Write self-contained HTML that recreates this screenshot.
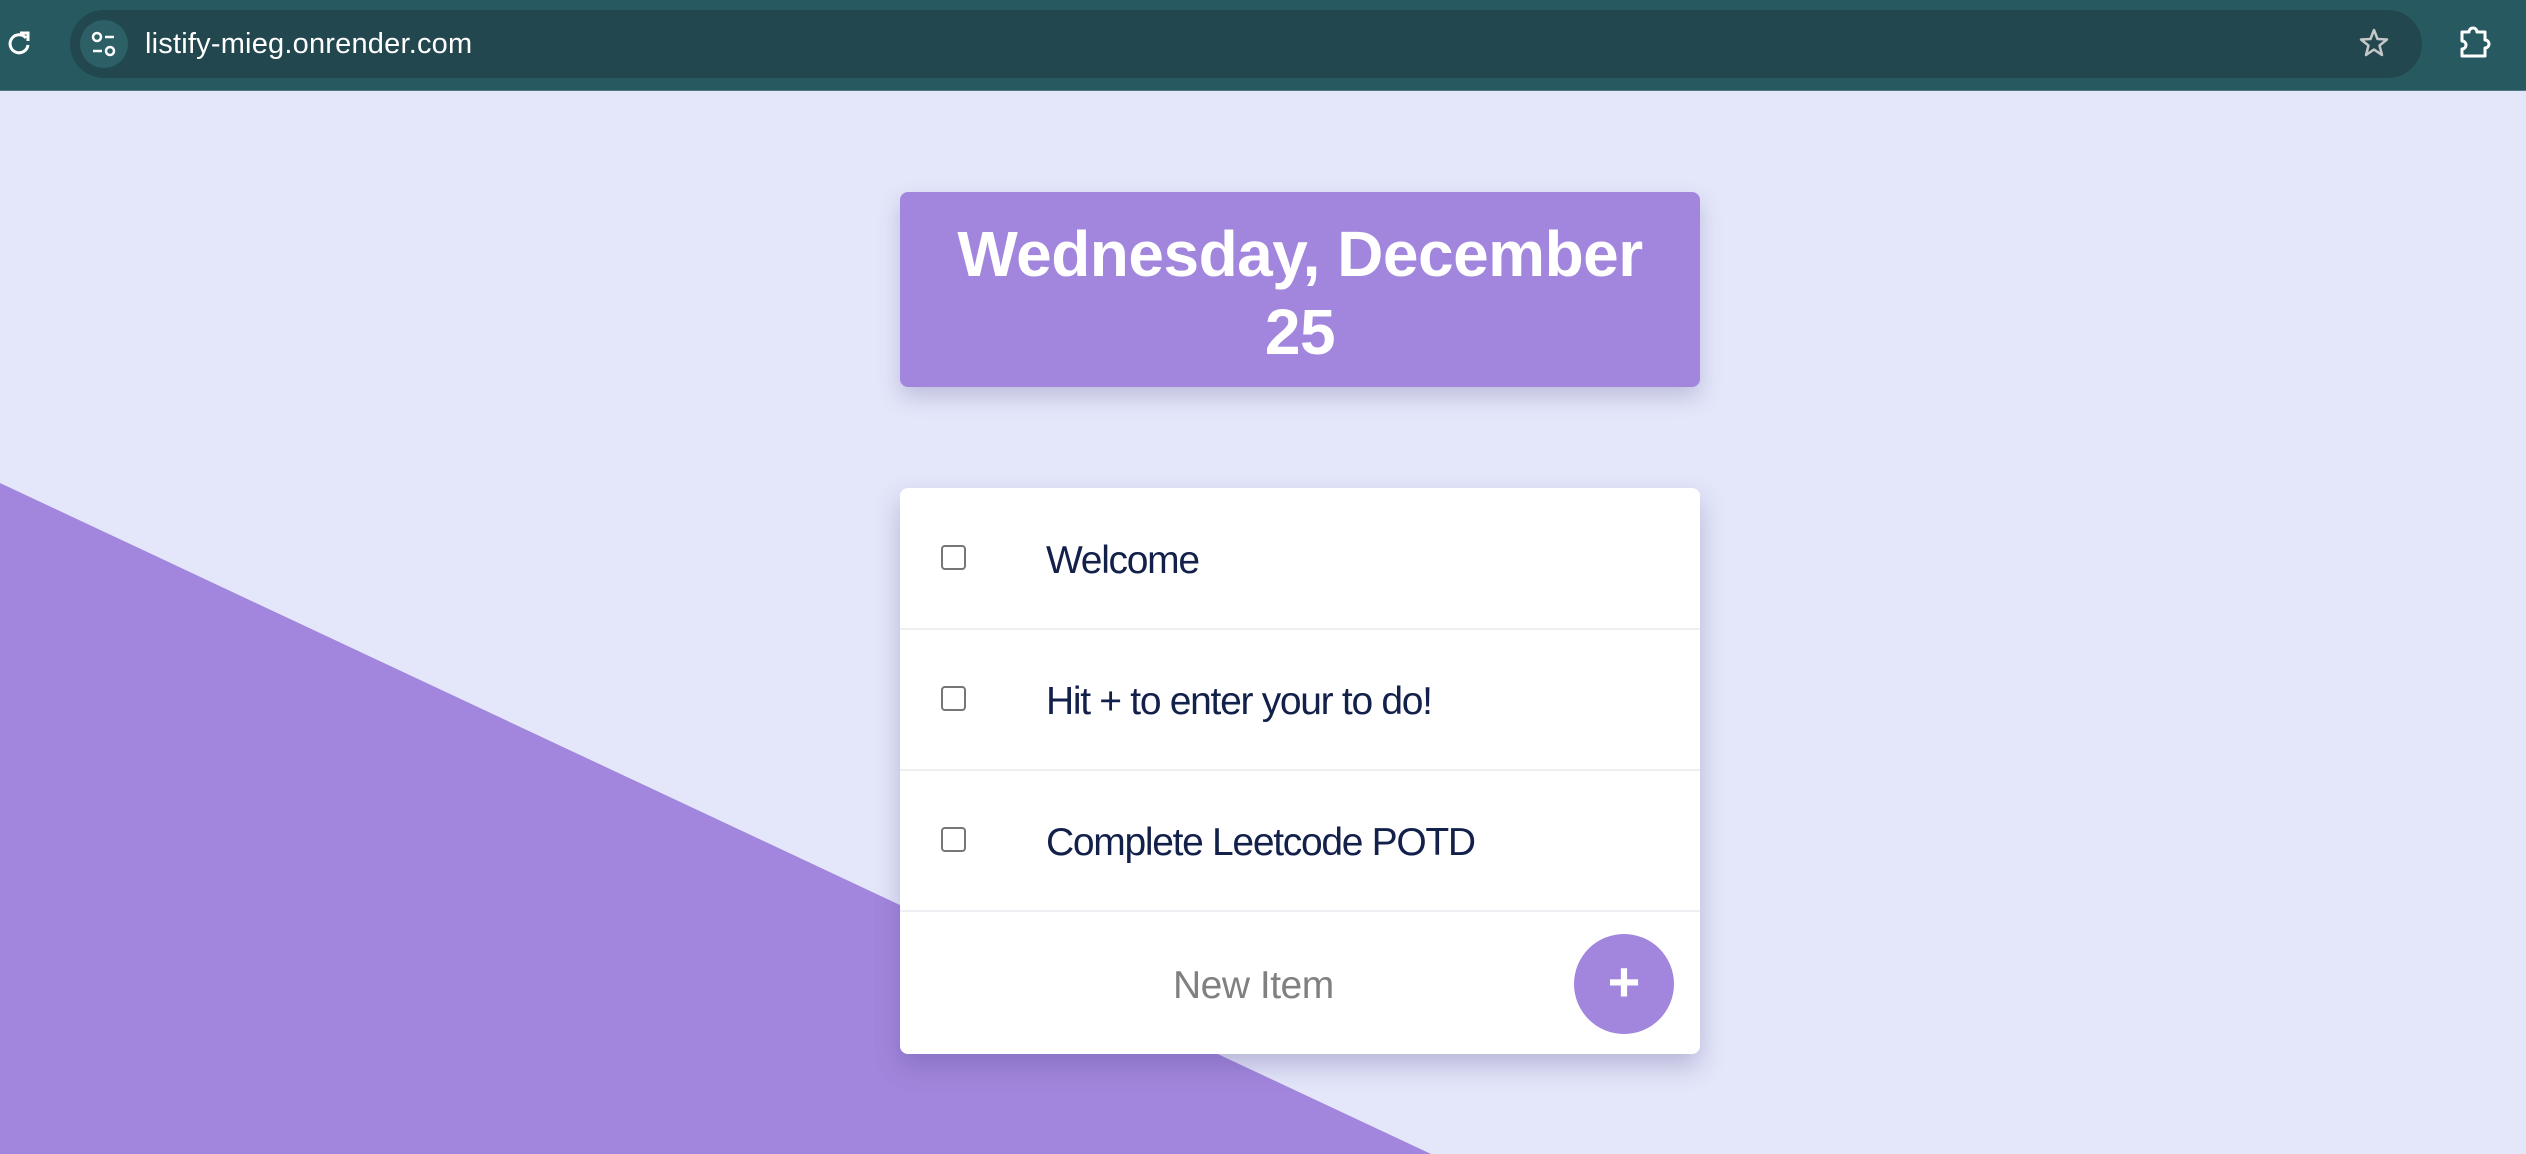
<!DOCTYPE html>
<html><head><meta charset="utf-8"><style>
*{margin:0;padding:0;box-sizing:border-box}
body{width:2526px;height:1154px;overflow:hidden;background:#e4e7fa;font-family:"Liberation Sans",Helvetica,Arial,sans-serif;position:relative}
.bar{position:absolute;left:0;top:0;width:2526px;height:91px;background:#265a60;border-bottom:1px solid #4d7a80}
.omni{position:absolute;left:70px;top:10px;width:2352px;height:68px;border-radius:34px;background:#22474e}
.url{position:absolute;left:145px;top:28px;color:#fff;font-size:29px;letter-spacing:0.2px}
.tri{position:absolute;left:0;top:0}
.head{position:absolute;left:900px;top:192px;width:800px;height:195px;background:#a286de;border-radius:8px;box-shadow:0 10px 22px rgba(80,70,140,.25);color:#fff;font-weight:bold;font-size:64px;line-height:78px;text-align:center;padding-top:23px;letter-spacing:-0.5px}
.card{position:absolute;left:900px;top:488px;width:800px;height:566px;background:#fff;border-radius:8px;box-shadow:0 12px 26px rgba(80,70,140,.3)}
.row{position:absolute;left:0;width:800px;height:142px;border-bottom:2px solid #eeeff2}
.cb{position:absolute;left:41px;top:57px;width:25px;height:25px;border:2px solid #767676;border-radius:4px}
.txt{position:absolute;left:146px;top:51px;font-size:39px;color:#12204a;letter-spacing:-1.3px}
.new{position:absolute;left:273px;top:476px;font-size:39px;color:#808080;letter-spacing:-0.5px}
.plus{position:absolute;left:674px;top:446px;width:100px;height:100px;border-radius:50%;background:#a286de;color:#fff;font-size:56px;font-weight:bold;text-align:center;line-height:96px}
</style></head><body>
<svg class="tri" width="2526" height="1154"><polygon points="0,483 1431,1154 0,1154" fill="#a286dd"/></svg>
<div class="bar">
<svg style="position:absolute;left:6px;top:30px" width="26" height="28" viewBox="0 0 26 28"><path d="M20 8 A9 9 0 1 0 22 15" fill="none" stroke="#fff" stroke-width="3"/><path d="M14 3 L22 3 L22 11" fill="none" stroke="#fff" stroke-width="3"/></svg>
<div class="omni"></div>
<svg style="position:absolute;left:80px;top:20px" width="48" height="48"><circle cx="24" cy="24" r="24" fill="#2d5f66"/><circle cx="17" cy="17" r="4" fill="none" stroke="#fff" stroke-width="2.5"/><line x1="25" y1="17" x2="34" y2="17" stroke="#fff" stroke-width="2.5"/><line x1="13" y1="31" x2="22" y2="31" stroke="#fff" stroke-width="2.5"/><circle cx="30" cy="31" r="4" fill="none" stroke="#fff" stroke-width="2.5"/></svg>
<div class="url">listify-mieg.onrender.com</div>
<svg style="position:absolute;left:2358px;top:27px" width="32" height="32" viewBox="0 0 32 32"><polygon points="16,3 19.5,12 29,12.5 21.5,18.5 24,28 16,22.5 8,28 10.5,18.5 3,12.5 12.5,12" fill="none" stroke="#c4c8c8" stroke-width="2.5" stroke-linejoin="round"/></svg>
<svg style="position:absolute;left:2458px;top:26px" width="36" height="34" viewBox="0 0 36 34"><path d="M4 6 H11 A4 4 0 0 1 19 6 H27 V14 A4 4 0 0 1 27 22 V30 H4 V23 A4 4 0 0 0 4 15 Z" fill="none" stroke="#fff" stroke-width="3" stroke-linejoin="round"/></svg>
</div>
<div class="head">Wednesday, December<br>25</div>
<div class="card">
<div class="row" style="top:0"><div class="cb"></div><div class="txt">Welcome</div></div>
<div class="row" style="top:141px"><div class="cb"></div><div class="txt">Hit + to enter your to do!</div></div>
<div class="row" style="top:282px"><div class="cb"></div><div class="txt">Complete Leetcode POTD</div></div>
<div class="new">New Item</div>
<div class="plus">+</div>
</div>
</body></html>
